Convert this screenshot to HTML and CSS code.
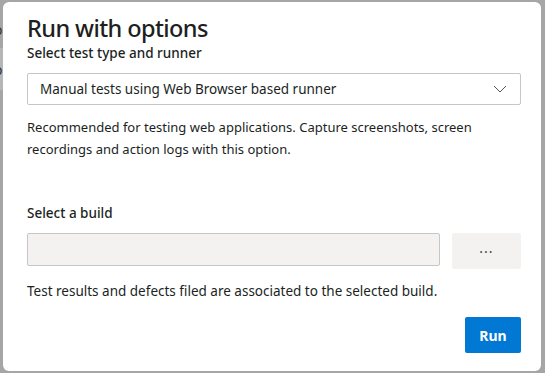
FILE: index.html
```html
<!DOCTYPE html>
<html lang="en">
<head>
  <meta charset="UTF-8">
  <title>Run with options</title>
  <link rel="stylesheet" href="styles.css">
</head>
<body>

<div class="backdrop">
  <div class="backdrop-edge">
    <span class="edge-text">o</span>
    <div class="edge-band"><span class="edge-text">o</span></div>
  </div>

  <div class="dialog">
    <h1 class="dialog-title">Run with options</h1>

    <label class="field-label">Select test type and runner</label>
    <div class="dropdown">
      <span>Manual tests using Web Browser based runner</span>
      <svg class="chevron" width="16" height="16" viewBox="0 0 16 16">
        <path d="M2 5 L8 11 L14 5" fill="none" stroke="#555" stroke-width="1"/>
      </svg>
    </div>
    <p class="hint">Recommended for testing web applications. Capture screenshots, screen recordings and action logs with this option.</p>

    <label class="field-label build-label">Select a build</label>
    <div class="build-row">
      <div class="build-input"></div>
      <button class="more-btn">&middot;&middot;&middot;</button>
    </div>
    <p class="note">Test results and defects filed are associated to the selected build.</p>

    <div class="actions">
      <button class="run-btn">Run</button>
    </div>
  </div>
</div>

</body>
</html>
```

FILE: styles.css
```css
html, body {
  margin: 0;
  padding: 0;
}

body {
  font-family: "Noto Sans", "Open Sans", sans-serif;
  color: #201f1e;
  background-color: #a6a6a6;
}

.backdrop {
  display: flex;
  width: 545px;
  height: 373px;
  overflow: hidden;
  background-color: #a6a6a6;
}

.backdrop-edge {
  width: 3px;
  flex: none;
  overflow: hidden;
  padding-top: 20px;
}

.edge-text {
  display: block;
  font-size: 14px;
  line-height: 20px;
  margin-left: -6px;
  color: #333;
}

.edge-band {
  background-color: #b6b6b6;
  margin-top: 8px;
  padding: 12px 0 10px;
}

.dialog {
  margin: 2px 0 2px 0;
  width: 538px;
  background-color: #fff;
  border-radius: 6px;
  padding: 9px 20px 0 24px;
  box-sizing: border-box;
}

.dialog-title {
  margin: 0;
  font-size: 23.5px;
  font-weight: 500;
  line-height: 35px;
  letter-spacing: -0.6px;
}

.field-label {
  display: block;
  font-size: 13.5px;
  font-weight: 500;
  line-height: 20px;
  margin-top: -3px;
}

.dropdown {
  margin-top: 10px;
  height: 32px;
  border: 1px solid #c8c6c4;
  border-radius: 2px;
  box-sizing: border-box;
  display: flex;
  align-items: center;
  justify-content: space-between;
  padding: 0 12px 0 12px;
  font-size: 13.5px;
}

.chevron {
  width: 16px;
  height: 16px;
}

.hint {
  margin: 11px 0 0 0;
  font-size: 13px;
  line-height: 22px;
}

.build-label {
  margin-top: 43px;
}

.build-row {
  display: flex;
  gap: 12px;
  margin-top: 10px;
}

.build-input {
  flex: 1;
  height: 33px;
  background-color: #f3f2f1;
  border: 1px solid #c8c6c4;
  border-radius: 2px;
  box-sizing: border-box;
}

.more-btn {
  width: 69px;
  height: 36px;
  border: none;
  border-radius: 2px;
  background-color: #f3f2f1;
  color: #444;
  font-family: inherit;
  font-size: 14px;
  letter-spacing: 1px;
}

.note {
  margin: 12px 0 0 0;
  font-size: 13.5px;
  line-height: 20px;
}

.actions {
  display: flex;
  justify-content: flex-end;
  margin-top: 16px;
}

.run-btn {
  width: 56px;
  height: 36px;
  border: none;
  border-radius: 2px;
  background-color: #0078d4;
  color: #fff;
  font-family: inherit;
  font-size: 14px;
  font-weight: 700;
}
```
